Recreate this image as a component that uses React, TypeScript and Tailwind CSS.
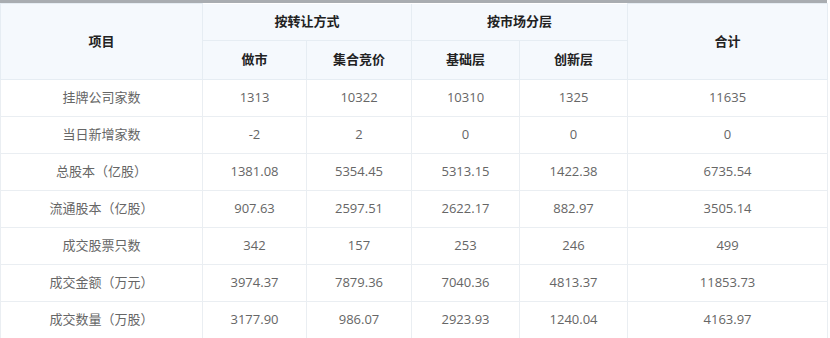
import React from "react";

const rows: string[][] = [
  ["挂牌公司家数", "1313", "10322", "10310", "1325", "11635"],
  ["当日新增家数", "-2", "2", "0", "0", "0"],
  ["总股本（亿股）", "1381.08", "5354.45", "5313.15", "1422.38", "6735.54"],
  ["流通股本（亿股）", "907.63", "2597.51", "2622.17", "882.97", "3505.14"],
  ["成交股票只数", "342", "157", "253", "246", "499"],
  ["成交金额（万元）", "3974.37", "7879.36", "7040.36", "4813.37", "11853.73"],
  ["成交数量（万股）", "3177.90", "986.07", "2923.93", "1240.04", "4163.97"],
];

export default function App() {
  const font = { fontFamily: '"Open Sans", "Noto Sans CJK SC", sans-serif' };
  return (
    <div className="w-[830px] h-[338px] overflow-hidden bg-white" style={font}>
      <div className="h-[3px] w-[827px] bg-[#a9adb1]" />
      <table className="table-fixed border-collapse w-[827px] text-[13px]">
        <colgroup>
          <col className="w-[202px]" />
          <col className="w-[104px]" />
          <col className="w-[105px]" />
          <col className="w-[108px]" />
          <col className="w-[108px]" />
          <col className="w-[200px]" />
        </colgroup>
        <thead>
          <tr className="h-[37px]">
            <th rowSpan={2} className="border border-[#e6edf3] bg-[#f5f9fd] font-bold text-[#222] text-center">项目</th>
            <th colSpan={2} className="border border-[#e6edf3] border-t-0 bg-[#f5f9fd] font-bold text-[#222] text-center">按转让方式</th>
            <th colSpan={2} className="border border-[#e6edf3] border-t-0 bg-[#f5f9fd] font-bold text-[#222] text-center">按市场分层</th>
            <th rowSpan={2} className="border border-[#e6edf3] bg-[#f5f9fd] font-bold text-[#222] text-center">合计</th>
          </tr>
          <tr className="h-[39px]">
            <th className="border border-[#e6edf3] bg-[#f5f9fd] font-bold text-[#222] text-center">做市</th>
            <th className="border border-[#e6edf3] bg-[#f5f9fd] font-bold text-[#222] text-center">集合竞价</th>
            <th className="border border-[#e6edf3] bg-[#f5f9fd] font-bold text-[#222] text-center">基础层</th>
            <th className="border border-[#e6edf3] bg-[#f5f9fd] font-bold text-[#222] text-center">创新层</th>
          </tr>
        </thead>
        <tbody>
          {rows.map((r, i) => (
            <tr key={i} className="h-[37px]">
              {r.map((c, j) => (
                <td key={j} className="border border-[#eaeef2] text-center text-[#666] p-0">
                  {c}
                </td>
              ))}
            </tr>
          ))}
        </tbody>
      </table>
    </div>
  );
}
